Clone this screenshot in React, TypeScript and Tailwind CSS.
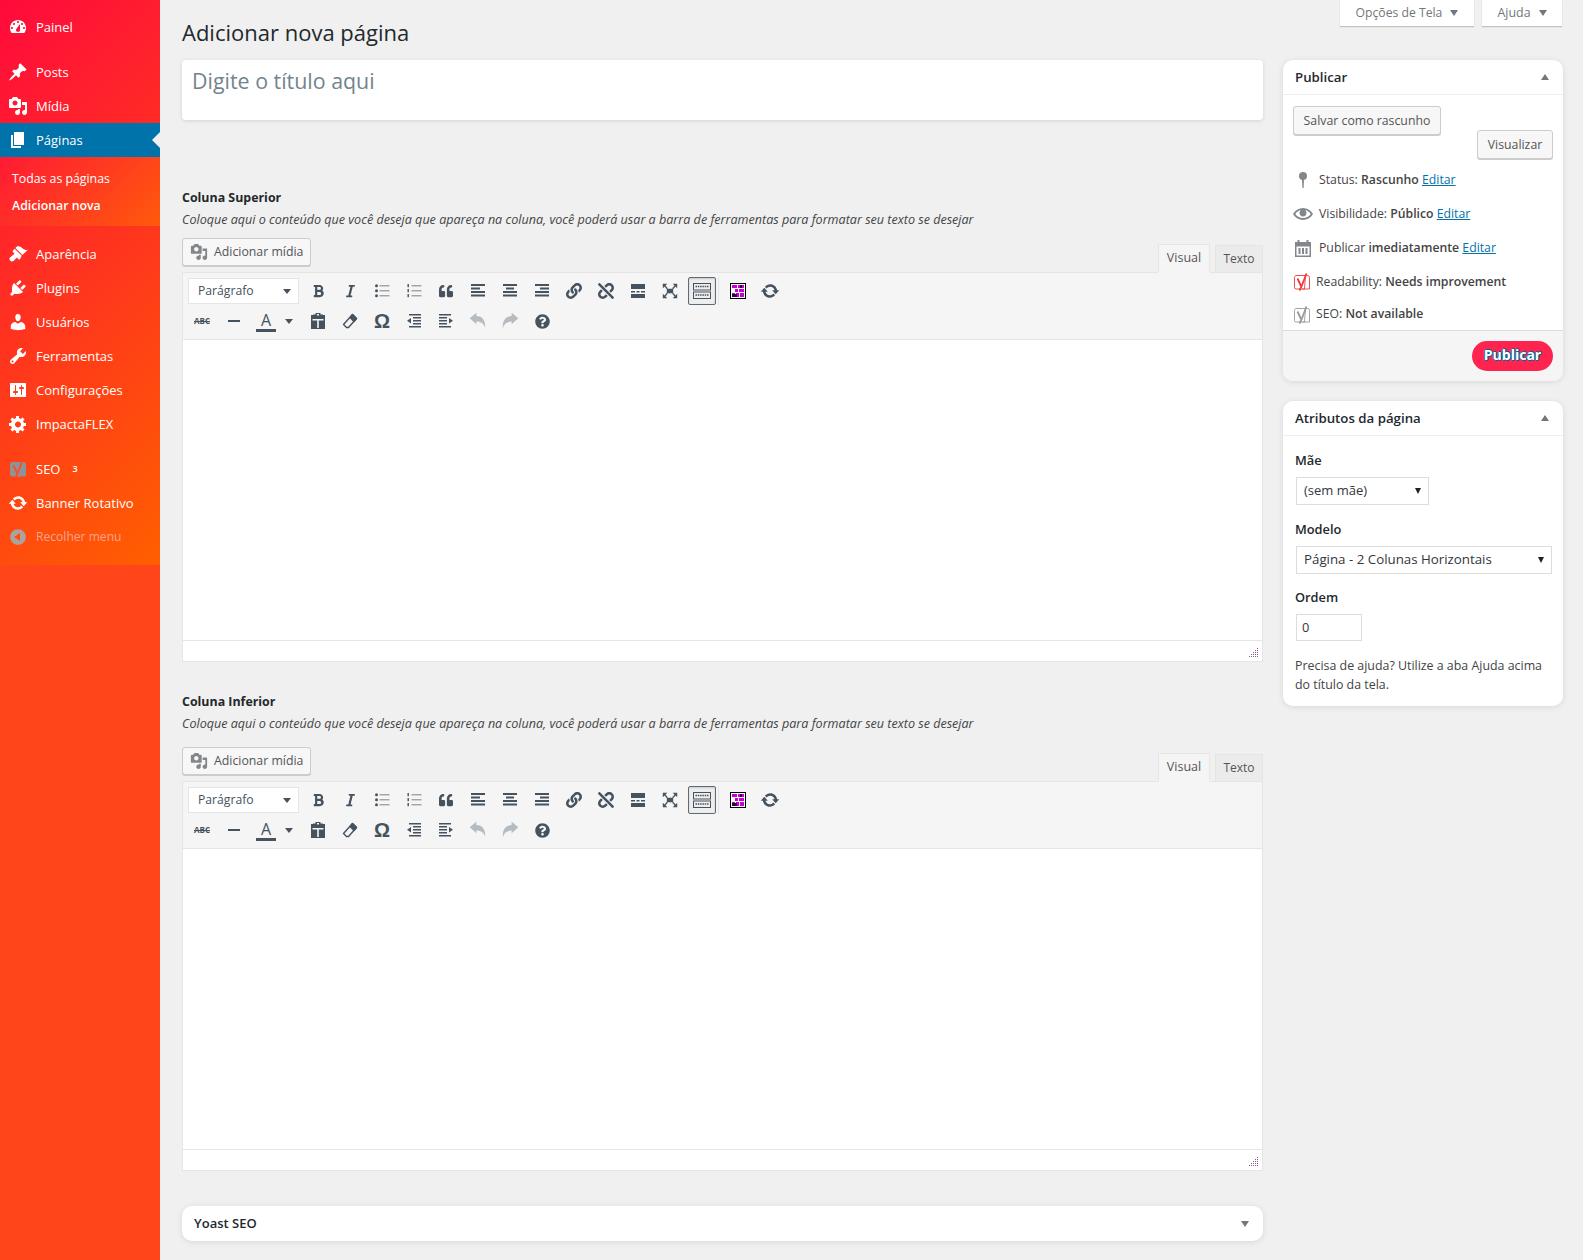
import { FaBold, FaItalic, FaQuoteLeft, FaLink, FaUnlink, FaQuestionCircle } from "react-icons/fa"

const dash = {
  painel: "M3.76 16h12.48c1.1-1.37 1.76-3.11 1.76-5 0-4.42-3.58-8-8-8s-8 3.58-8 8c0 1.89.66 3.63 1.76 5zM10 4c.55 0 1 .45 1 1s-.45 1-1 1-1-.45-1-1 .45-1 1-1zM6 6c.55 0 1 .45 1 1s-.45 1-1 1-1-.45-1-1 .45-1 1-1zm8 0c.55 0 1 .45 1 1s-.45 1-1 1-1-.45-1-1 .45-1 1-1zm-5.37 5.55L12 7v6c0 1.1-.9 2-2 2s-2-.9-2-2c0-.57.24-1.08.63-1.45zM4 10c.55 0 1 .45 1 1s-.45 1-1 1-1-.45-1-1 .45-1 1-1zm12 0c.55 0 1 .45 1 1s-.45 1-1 1-1-.45-1-1 .45-1 1-1z",
  post: "M10.44 3.02l1.82-1.82 6.36 6.35-1.83 1.82c-1.05-.68-2.48-.57-3.41.36l-.75.75c-.92.93-1.04 2.35-.35 3.41l-1.83 1.82-2.41-2.41-2.8 2.79c-.42.42-3.38 2.71-3.8 2.29s1.86-3.39 2.28-3.81l2.79-2.79L4.1 9.36l1.83-1.82c1.05.69 2.48.57 3.4-.36l.75-.75c.93-.92 1.05-2.35.36-3.41z",
  media: "M13 11V4c0-.55-.45-1-1-1h-1.67L9 1H5L3.67 3H2c-.55 0-1 .45-1 1v7c0 .55.45 1 1 1h10c.55 0 1-.45 1-1zM7 4.5c1.38 0 2.5 1.12 2.5 2.5S8.38 9.5 7 9.5 4.5 8.38 4.5 7 5.62 4.5 7 4.5zM14 6h5v10.5c0 1.38-1.12 2.5-2.5 2.5S14 17.88 14 16.5s1.12-2.5 2.5-2.5c.17 0 .34.02.5.05V9h-3V6zm-4 8.05V13h2v3.5c0 1.38-1.12 2.5-2.5 2.5S7 17.88 7 16.5 8.12 14 9.5 14c.17 0 .34.02.5.05z",
  page: "M6 15V2h10v13H6zm-1 1h8v2H3V5h2v11z",
  brush: "M14.48 11.06L7.41 3.99l1.5-1.5c.5-.56 2.3-.47 3.51.32 1.21.8 1.43 1.28 2.91 2.1 1.18.64 2.45 1.26 4.45.85zM13.77 11.77L6.7 4.7 4.93 6.47c-.39.39-.39 1.02 0 1.41l1.06 1.06c.39.39.39 1.03 0 1.42-.6.6-1.43 1.11-2.21 1.69-.35.26-.7.53-1.01.84C1.43 13.23.9 14.8 2 16.5c1.2 1.5 3 1 3.8.3.6-.5 1.4-1.5 2.3-2.5.5-.6 1-.5 1.4-.1l1.06 1.06c.39.39 1.02.39 1.41 0z",
  plugin: "M13.11 4.36L9.87 7.6 8 5.73l3.24-3.24c.35-.34 1.05-.2 1.56.32.52.51.66 1.21.31 1.55zm-8 1.77l.91-1.12 9.01 9.01-1.19.84c-.71.71-2.63 1.16-3.82 1.16H6.14L4.9 17.26c-.59.59-1.54.59-2.12 0-.59-.58-.59-1.53 0-2.12l1.24-1.24v-3.88c0-1.13.4-3.19 1.09-3.89zm7.26 3.97l3.24-3.24c.34-.35 1.04-.21 1.55.31.52.51.66 1.21.31 1.55l-3.24 3.25z",
  users: "M10 9.25c-2.27 0-2.73-3.44-2.73-3.44C7 4.02 7.82 2 9.97 2c2.16 0 2.98 2.02 2.71 3.81 0 0-.41 3.44-2.68 3.44zm0 2.57L12.72 10c2.39 0 4.52 2.33 4.52 4.53v2.49s-3.65 1.13-7.24 1.13c-3.65 0-7.24-1.13-7.24-1.13v-2.49c0-2.25 1.94-4.48 4.47-4.48z",
  tools: "M16.68 9.77c-1.34 1.34-3.3 1.67-4.95.99l-5.41 6.52c-.99.99-2.59.99-3.58 0s-.99-2.59 0-3.57l6.52-5.42c-.68-1.65-.35-3.61.99-4.95 1.28-1.28 3.12-1.62 4.72-1.06l-2.89 2.89 2.82 2.82 2.86-2.87c.53 1.58.18 3.39-1.08 4.65zM3.81 16.21c.4.39 1.04.39 1.43 0 .4-.4.4-1.04 0-1.43-.39-.4-1.03-.4-1.43 0-.39.39-.39 1.03 0 1.43z",
  settings: "M18 16V4c0-.55-.45-1-1-1H3c-.55 0-1 .45-1 1v12c0 .55.45 1 1 1h14c.55 0 1-.45 1-1zM8 11h1c.55 0 1 .45 1 1s-.45 1-1 1H8v1.5c0 .28-.22.5-.5.5s-.5-.22-.5-.5V13H6c-.55 0-1-.45-1-1s.45-1 1-1h1V5.5c0-.28.22-.5.5-.5s.5.22.5.5V11zm5-2h-1c-.55 0-1-.45-1-1s.45-1 1-1h1V5.5c0-.28.22-.5.5-.5s.5.22.5.5V7h1c.55 0 1 .45 1 1s-.45 1-1 1h-1v5.5c0 .28-.22.5-.5.5s-.5-.22-.5-.5V9z",
  generic: "M18 12h-2.18c-.17.7-.44 1.35-.81 1.93l1.54 1.54-2.1 2.1-1.54-1.54c-.58.36-1.23.63-1.91.79V19H8v-2.18c-.68-.16-1.33-.43-1.91-.79l-1.54 1.54-2.12-2.12 1.54-1.54c-.36-.58-.63-1.23-.79-1.91H1V9.03h2.17c.16-.7.44-1.35.8-1.94L2.43 5.55l2.1-2.1 1.54 1.54c.58-.37 1.24-.64 1.93-.81V2h3v2.18c.68.16 1.33.43 1.91.79l1.54-1.54 2.12 2.12-1.54 1.54c.36.59.64 1.24.8 1.94H18V12zm-8 1.5c1.66 0 3-1.34 3-3s-1.34-3-3-3-3 1.34-3 3 1.34 3 3 3z",
  update: "M10.2 3.28c3.53 0 6.43 2.61 6.92 6h2.08l-3.5 4-3.5-4h2.32c-.45-1.97-2.21-3.44-4.32-3.44-1.45 0-2.73.71-3.54 1.78L4.95 5.66C6.23 4.2 8.11 3.28 10.2 3.28zm-.4 13.44c-3.52 0-6.43-2.61-6.92-6H.8l3.5-4c1.17 1.33 2.33 2.67 3.5 4H5.48c.45 1.97 2.21 3.44 4.32 3.44 1.45 0 2.73-.71 3.54-1.78l1.71 1.95c-1.28 1.46-3.15 2.39-5.25 2.39z",
  eye: "M19.7 9.4C17.7 6 14 3.9 10 3.9S2.3 6 .3 9.4L0 10l.3.6c2 3.4 5.7 5.5 9.7 5.5s7.7-2.1 9.7-5.5l.3-.6-.3-.6zM10 14.1c-3.1 0-6-1.6-7.7-4.1C3.6 8 5.7 6.6 8 6.1c-.9.6-1.5 1.7-1.5 2.9 0 1.9 1.6 3.5 3.5 3.5s3.5-1.6 3.5-3.5c0-1.2-.6-2.3-1.5-2.9 2.3.5 4.4 1.9 5.7 3.9-1.7 2.5-4.6 4.1-7.7 4.1z",
}

function Dash({ d, className }: { d: string; className?: string }) {
  return (
    <svg viewBox="0 0 20 20" className={className} fill="currentColor">
      <path d={d} fillRule="evenodd" />
    </svg>
  )
}

// yoast logo, box with the y and its slash
function YoastMark({ box, y, fillBox }: { box: string; y: string; fillBox?: boolean }) {
  return (
    <svg viewBox="0 0 18 18" className="w-[18px] h-[18px] shrink-0">
      <path d="M4 2.500h8.500l-1 13.500H3a1.500 1.500 0 0 1-1.500-1.500V4.500A2 2 0 0 1 4 2.500z" fill={fillBox ? box : "none"} stroke={box} strokeWidth="0.9" />
      <path d="M12.500 2.500h2a2 2 0 0 1 2 2V16h-7" fill={fillBox ? box : "none"} stroke={box} strokeWidth="0.9" />
      <path d="M4.500 5.500l3.500 7.500M13.500 0.500L8.500 13.500 6.500 17.500" fill="none" stroke={y} strokeWidth="1.800" />
    </svg>
  )
}

function MenuItem({ label, d, active, muted }: { label: string; d: string; active?: boolean; muted?: boolean }) {
  return (
    <div className={`relative flex items-center h-[34px] ${active ? "bg-[#0073aa]" : ""} ${muted ? "text-[#f7a48c]" : "text-white"}`}>
      <Dash d={d} className={`w-5 h-5 ml-2 shrink-0 ${muted ? "text-[#aaa49f]" : ""}`} />
      <span className={`ml-2 pt-px ${muted ? "text-[12.100px]" : "text-[13px]"}`}>{label}</span>
      {active && <div className="absolute right-0 top-[9px] w-0 h-0 border-y-[8px] border-y-transparent border-r-[8px] border-r-[#f1f1f1]" />}
    </div>
  )
}

function Sidebar() {
  return (
    <aside className="w-[160px] shrink-0 bg-[#ff4519]">
      <div className="bg-[linear-gradient(135deg,#ff0a3c,#ff5f00)] pt-[10px] pb-[11px]">
        <MenuItem label="Painel" d={dash.painel} />
        <div className="h-[11px]" />
        <MenuItem label="Posts" d={dash.post} />
        <MenuItem label="Mídia" d={dash.media} />
        <MenuItem label="Páginas" d={dash.page} active />
        <div className="h-[69px] pt-[8px] flex flex-col text-[12.300px] text-white bg-[linear-gradient(135deg,#ff1a34,#ff5a0c)] pl-3 leading-[27px]">
          <span>Todas as páginas</span>
          <span className="font-semibold">Adicionar nova</span>
        </div>
        <div className="h-[11px]" />
        <MenuItem label="Aparência" d={dash.brush} />
        <MenuItem label="Plugins" d={dash.plugin} />
        <MenuItem label="Usuários" d={dash.users} />
        <MenuItem label="Ferramentas" d={dash.tools} />
        <MenuItem label="Configurações" d={dash.settings} />
        <MenuItem label="ImpactaFLEX" d={dash.generic} />
        <div className="h-[11px]" />
        <div className="flex items-center h-[34px] text-white">
          <div className="ml-[9px] shrink-0"><YoastMark box="#8d9499" y="#ff4a25" fillBox /></div>
          <span className="ml-[9px] pt-px text-[13px]">SEO</span>
          <span className="ml-[12px] text-[9px] font-semibold">3</span>
        </div>
        <MenuItem label="Banner Rotativo" d={dash.update} />
        <MenuItem label="Recolher menu" d="M10 2.16c4.33 0 7.84 3.51 7.84 7.84s-3.51 7.84-7.84 7.84S2.16 14.33 2.16 10 5.71 2.16 10 2.16zm2 11.84V6l-6 4z" muted />
      </div>
    </aside>
  )
}

const ink = "text-[#46535e]"

function Lines({ rows }: { rows: [number, number][] }) {
  return (
    <svg viewBox="0 0 20 20" className="w-5 h-5" fill="currentColor">
      {rows.map(([x, w], i) => (
        <rect key={i} x={x} y={3 + i * 3.500} width={w} height="2" />
      ))}
    </svg>
  )
}

function ListIcon({ numbered }: { numbered?: boolean }) {
  return (
    <svg viewBox="0 0 20 20" className="w-5 h-5" fill="currentColor">
      {[4, 9, 14].map((y) => (
        <g key={y}>
          <rect x="7.500" y={y + 0.300} width="10" height="1" opacity="0.7" />
          {numbered ? <rect x="3.500" y={y - 1} width="1.400" height="3.200" /> : <circle cx="4.500" cy={y + 0.800} r="1.500" />}
        </g>
      ))}
    </svg>
  )
}

function ToolBtn({ children, className }: { children: React.ReactNode; className?: string }) {
  return <div className={`w-7 h-7 flex items-center justify-center ${className ?? ""}`}>{children}</div>
}

function Caret({ className }: { className?: string }) {
  return <div className={`w-0 h-0 border-x-[4px] border-x-transparent border-t-[5px] border-t-[#46535e] ${className ?? ""}`} />
}

function Toolbar() {
  return (
    <div className={`bg-[#f5f5f5] h-[67px] border-b border-[#e5e5e5] pl-[5px] pt-[4px] flex flex-col gap-[2px] ${ink}`}>
      <div className="flex items-center h-7 gap-1">
        <div className="w-[111px] h-[26px] bg-white border border-[#e5e5e5] flex items-center justify-between pl-[9px] pr-[7px] text-[12.200px] mr-[1px]">
          <span className="pt-px">Parágrafo</span>
          <Caret />
        </div>
        <ToolBtn><FaBold className="w-[11px] h-[14px]" /></ToolBtn>
        <ToolBtn><FaItalic className="w-[11px] h-[14px]" /></ToolBtn>
        <ToolBtn><ListIcon /></ToolBtn>
        <ToolBtn><ListIcon numbered /></ToolBtn>
        <ToolBtn><FaQuoteLeft className="w-[16px] h-[14px]" /></ToolBtn>
        <ToolBtn><Lines rows={[[3, 14], [3, 9], [3, 14], [3, 14]]} /></ToolBtn>
        <ToolBtn><Lines rows={[[3, 14], [6, 8], [3, 14], [3, 14]]} /></ToolBtn>
        <ToolBtn><Lines rows={[[3, 14], [8, 9], [3, 14], [3, 14]]} /></ToolBtn>
        <ToolBtn><FaLink className="w-[16px] h-[16px]" /></ToolBtn>
        <ToolBtn><FaUnlink className="w-[16px] h-[16px]" /></ToolBtn>
        <ToolBtn>
          <svg viewBox="0 0 20 20" className="w-5 h-5" fill="currentColor">
            <path d="M3 3h14v5H3zM3 10h4v1.500H3zM8.500 10h3v1.500h-3zM13 10h4v1.500h-4zM3 13h14v4H3z" />
          </svg>
        </ToolBtn>
        <ToolBtn>
          <svg viewBox="0 0 20 20" className="w-[18px] h-[18px]" fill="currentColor">
            <path d="M6.500 7.500h7v5h-7zM2 2h5L2 7zM18 2v5L13 2zM2 18v-5l5 5zM18 18h-5l5-5z" />
            <path d="M4 4l3 3.500M16 4l-3 3.500M4 16l3-3.500M16 16l-3-3.500" stroke="currentColor" strokeWidth="1.500" />
          </svg>
        </ToolBtn>
        <ToolBtn className="border border-[#5c6b76] rounded-[2px] bg-[#eeeeee] shadow-[inset_0_1px_2px_rgba(0,0,0,0.15)]">
          <svg viewBox="0 0 20 20" className="w-5 h-5" fill="none" stroke="currentColor" strokeWidth="1">
            <rect x="1.500" y="2.500" width="17" height="6.500" />
            <rect x="1.500" y="11" width="17" height="6.500" />
            <path d="M3.500 5.500h13M3.500 14h13" strokeDasharray="1.500 0.800" strokeWidth="1.600" />
          </svg>
        </ToolBtn>
        <div className="w-px h-7 bg-[#e5e5e5] -ml-[2px] mr-[5px]" />
        <div className="w-[28px] h-7 flex items-center justify-center -ml-[4px]">
          <svg viewBox="0 0 16 16" className="w-[16px] h-[16px]">
            <rect x="0.500" y="0.500" width="15" height="15" fill="#fff" stroke="#000" />
            <path d="M2 2h5v3H2zM8 2h2v3H8zM12 2h2v3h-2zM5 6h3v3H5zM9 6h5v3H9zM2 10h3v4H2zM6 10h3v4H6zM10 10h4v4h-4z" fill="#c700d6" />
            <path d="M2 11h5v3H2zM10 2h2v3h-2z" fill="#2d0a3a" />
          </svg>
        </div>
        <ToolBtn><Dash d={dash.update} className="w-5 h-5" /></ToolBtn>
      </div>
      <div className="flex items-center h-7 gap-1">
        <ToolBtn><span className="text-[8px] font-bold line-through">ABC</span></ToolBtn>
        <ToolBtn><div className="w-3 h-[2px] bg-[#46535e]" /></ToolBtn>
        <div className="w-[48px] h-7 flex items-center">
          <div className="w-7 flex flex-col items-center">
            <span className="text-[16px] leading-[18px]">A</span>
            <div className="w-5 h-[3px] bg-[#46535e]" />
          </div>
          <Caret className="ml-[5px]" />
        </div>
        <ToolBtn>
          <svg viewBox="0 0 20 20" className="w-5 h-5" fill="currentColor">
            <path d="M7.500 2h5v1.500H15v.5H17v14H3V4h2v-.5h2.500zM9 3v1.500h2V3zM4.500 8v1.500h11V8zM9.200 9.500V17h1.600V9.500z" fillRule="evenodd" />
          </svg>
        </ToolBtn>
        <ToolBtn>
          <svg viewBox="0 0 20 20" className="w-5 h-5" fill="none" stroke="currentColor" strokeWidth="1.400" strokeLinejoin="round">
            <path d="M12.500 3.500l4 4-8 9h-2l-3-3z" />
            <path d="M12.500 3.500l4 4-2.500 3-4-4z" fill="currentColor" />
          </svg>
        </ToolBtn>
        <ToolBtn><span className="text-[20px] leading-none font-semibold font-['Liberation_Sans',sans-serif]">Ω</span></ToolBtn>
        <ToolBtn>
          <svg viewBox="0 0 20 20" className="w-5 h-5" fill="currentColor">
            <path d="M5 3h12v1.600H5zM9 6h8v1.600H9zM9 9h8v1.600H9zM9 12h8v1.600H9zM5 15h12v1.600H5zM3 9.800L7 7v5.600z" />
          </svg>
        </ToolBtn>
        <ToolBtn>
          <svg viewBox="0 0 20 20" className="w-5 h-5" fill="currentColor">
            <path d="M3 3h12v1.600H3zM3 6h8v1.600H3zM3 9h8v1.600H3zM3 12h8v1.600H3zM3 15h12v1.600H3zM17 9.800L13 7v5.600z" />
          </svg>
        </ToolBtn>
        <ToolBtn>
          <svg viewBox="0 0 20 20" className="w-[22px] h-[22px] text-[#b4bcc2]" fill="currentColor">
            <path d="M2.500 7.500L8.500 2.500v3c5.500 0 8.500 4 8 11-1-4-3.500-6-8-6v2.500z" />
          </svg>
        </ToolBtn>
        <ToolBtn>
          <svg viewBox="0 0 20 20" className="w-[22px] h-[22px] text-[#b4bcc2]" fill="currentColor">
            <path d="M17.500 7.500L11.500 2.500v3c-5.500 0-8.500 4-8 11 1-4 3.500-6 8-6v2.500z" />
          </svg>
        </ToolBtn>
        <ToolBtn><FaQuestionCircle className="w-[15px] h-[15px]" /></ToolBtn>
      </div>
    </div>
  )
}

function Resize() {
  return (
    <svg viewBox="0 0 10 10" className="w-[10px] h-[10px] text-[#8a5a8f]" fill="currentColor">
      {[[8, 0], [8, 2], [6, 2], [8, 4], [6, 4], [4, 4], [8, 6], [6, 6], [4, 6], [2, 6], [8, 8], [6, 8], [4, 8], [2, 8], [0, 8]].map(([x, y]) => (
        <rect key={`${x}-${y}`} x={x} y={y} width="1" height="1" />
      ))}
    </svg>
  )
}

function EditorBlock({ title, spaced }: { title: string; spaced?: boolean }) {
  return (
    <section>
      <h3 className="text-[12.400px] leading-[18px] font-bold text-[#23282d]">{title}</h3>
      <p className="mt-[4px] text-[12.570px] leading-[18px] italic text-[#444]">
        Coloque aqui o conteúdo que você deseja que apareça na coluna, você poderá usar a barra de ferramentas para formatar seu texto se desejar
      </p>
      <div className={`flex items-end justify-between h-[34px] ${spaced ? "mt-[14px]" : "mt-[9px]"}`}>
        <button className="mb-[6px] h-[28px] w-[129px] flex items-center gap-[4px] pl-[7px] bg-[#f7f7f7] border border-[#cccccc] rounded-[3px] shadow-[0_1px_0_#cccccc] text-[12.300px] text-[#555]">
          <Dash d={dash.media} className="w-[18px] h-[18px] text-[#82878c] shrink-0" />
          <span className="ml-[2px] pt-px">Adicionar mídia</span>
        </button>
        <div className="flex items-end gap-[5px] -mb-px z-10">
          <div className="w-[52px] h-[29px] bg-[#f5f5f5] border border-[#e5e5e5] border-b-[#f5f5f5] flex items-center justify-center text-[12.500px] text-[#555]">Visual</div>
          <div className="w-[48px] h-[28px] bg-[#ebebeb] border border-[#e5e5e5] flex items-center justify-center text-[12px] text-[#555]">Texto</div>
        </div>
      </div>
      <div className="border border-[#e5e5e5] bg-white">
        <Toolbar />
        <div className="h-[301px] bg-white border-b border-[#e5e5e5]" />
        <div className="h-[20px] flex items-end justify-end pr-[3px] pb-[3px]"><Resize /></div>
      </div>
    </section>
  )
}

function Box({ title, children }: { title: string; children: React.ReactNode }) {
  return (
    <div className="bg-white rounded-[10px] shadow-[0_1px_6px_rgba(0,0,0,0.1)] overflow-hidden">
      <div className="h-[35px] border-b border-[#eeeeee] flex items-center justify-between pl-[12px] pr-[14px]">
        <span className="pt-[2px] text-[13.250px] font-semibold text-[#23282d]">{title}</span>
        <div className="w-0 h-0 border-x-[4px] border-x-transparent border-b-[6px] border-b-[#72777c]" />
      </div>
      {children}
    </div>
  )
}

function Row({ icon, h, children, gap }: { icon: React.ReactNode; h: string; gap: string; children: React.ReactNode }) {
  return (
    <div className={`flex items-center pl-[10px] text-[12.250px] text-[#444] ${h}`}>
      <div className={`shrink-0 flex justify-center ${gap}`}>{icon}</div>
      <span>{children}</span>
    </div>
  )
}

function Edit() {
  return <a className="text-[#0073aa] underline">Editar</a>
}

function PublishBox() {
  return (
    <Box title="Publicar">
      <div className="px-[10px] pt-[11px] h-[65px] relative flex flex-col">
        <button className="self-start h-[29px] w-[148px] pt-px bg-[#f7f7f7] border border-[#cccccc] rounded-[3px] shadow-[0_1px_0_#cccccc] text-[12.300px] text-[#555]">Salvar como rascunho</button>
        <button className="self-end mt-[-5px] h-[29px] w-[76px] pt-px bg-[#f7f7f7] border border-[#cccccc] rounded-[3px] shadow-[0_1px_0_#cccccc] text-[12.300px] text-[#555]">Visualizar</button>
      </div>
      <div className="pt-[3px]">
        <Row h="h-[34px]" gap="w-[26px]" icon={
          <svg viewBox="0 0 20 20" className="w-5 h-5 -ml-[6px] text-[#82878c]" fill="currentColor">
            <circle cx="10" cy="6" r="4" />
            <path d="M9 9h2l-.4 9h-1.200z" />
          </svg>
        }>Status: <b className="font-semibold">Rascunho</b> <Edit /></Row>
        <Row h="h-[34px]" gap="w-[26px]" icon={<Dash d={dash.eye} className="w-5 h-5 -ml-[6px] text-[#82878c]" />}>
          Visibilidade: <b className="font-semibold">Público</b> <Edit />
        </Row>
        <Row h="h-[34px]" gap="w-[26px]" icon={
          <svg viewBox="0 0 20 20" className="w-5 h-5 -ml-[6px] text-[#82878c]" fill="currentColor">
            <path fillRule="evenodd" d="M2 4h2.500V2h2v2h7V2h2v2H18v15H2zM3.500 8.500V17.500h13V8.500zM5.500 10h2v6h-2zM9 10h2v6H9zM12.500 10h2v6h-2z" />
          </svg>
        }>Publicar <b className="font-semibold">imediatamente</b> <Edit /></Row>
        <Row h="h-[34px]" gap="w-[23px]" icon={<div className="-ml-[6px]"><YoastMark box="#ee3a3a" y="#ee3a3a" /></div>}>
          Readability: <b className="font-semibold">Needs improvement</b>
        </Row>
        <Row h="h-[31px]" gap="w-[23px]" icon={<div className="-ml-[6px]"><YoastMark box="#999999" y="#999999" /></div>}>
          SEO: <b className="font-semibold">Not available</b>
        </Row>
      </div>
      <div className="h-[51px] bg-[#f5f5f5] border-t border-[#dddddd] flex items-center justify-end pr-[10px]">
        <button className="w-[81px] h-[30px] pb-[3px] rounded-full bg-[#ff2450] text-white text-[14px] font-bold [text-shadow:0_1px_0_#006799,1px_0_0_#006799,0_-1px_0_#006799,-1px_0_0_#006799]">Publicar</button>
      </div>
    </Box>
  )
}

function FakeSelect({ label, w, size }: { label: string; w: string; size: string }) {
  return (
    <div className={`h-[28px] bg-white border border-[#dddddd] flex items-center justify-between pl-[7px] pr-[7px] text-[#32373c] ${size} ${w}`}>
      <span>{label}</span>
      <div className="w-0 h-0 border-x-[3.500px] border-x-transparent border-t-[6px] border-t-[#222]" />
    </div>
  )
}

function AttributesBox() {
  return (
    <Box title="Atributos da página">
      <div className="pl-[12px] pr-[10px] pt-[15px] pb-[12px] text-[12.800px] text-[#444]">
        <div className="font-semibold leading-[18px] text-[#23282d]">Mãe</div>
        <div className="mt-[8px] ml-px"><FakeSelect label="(sem mãe)" w="w-[133px]" size="text-[13px]" /></div>
        <div className="mt-[15px] font-semibold leading-[18px] text-[#23282d]">Modelo</div>
        <div className="mt-[8px] ml-px"><FakeSelect label="Página - 2 Colunas Horizontais" w="w-[256px]" size="text-[13.300px]" /></div>
        <div className="mt-[14px] font-semibold leading-[18px] text-[#23282d]">Ordem</div>
        <div className="mt-[8px] ml-px w-[66px] h-[27px] bg-white border border-[#dddddd] flex items-center pl-[5px] text-[#32373c]">0</div>
        <p className="mt-[15px] leading-[19px] text-[12.400px]">Precisa de ajuda? Utilize a aba Ajuda acima do título da tela.</p>
      </div>
    </Box>
  )
}

function ScreenTab({ label, w, size }: { label: string; w: string; size: string }) {
  return (
    <div className={`h-[26px] bg-white shadow-[0_1px_1px_rgba(0,0,0,0.2)] flex items-center justify-center gap-[8px] text-[#72777c] ${size} ${w}`}>
      {label}
      <div className="w-0 h-0 border-x-[4px] border-x-transparent border-t-[6px] border-t-[#72777c]" />
    </div>
  )
}

export default function App() {
  return (
    <div className="flex min-h-[1260px] bg-[#f0f0f0] font-['Open_Sans',sans-serif]">
      <Sidebar />
      <main className="flex gap-[20px] pl-[22px] pr-[20px] pb-[19px]">
        <div className="w-[1081px]">
          <h1 className="pt-[17px] h-[60px] text-[22px] leading-[30px] text-[#23282d]">Adicionar nova página</h1>
          <div className="h-[60px] bg-white rounded-[4px] shadow-[0_1px_4px_rgba(0,0,0,0.12)] pl-[10px] pt-[3px] text-[21.400px] leading-[36px] text-[#72848c]">Digite o título aqui</div>
          <div className="mt-[69px]"><EditorBlock title="Coluna Superior" /></div>
          <div className="mt-[31px]"><EditorBlock title="Coluna Inferior" spaced /></div>
          <div className="mt-[35px] h-[35px] bg-white rounded-[10px] shadow-[0_1px_6px_rgba(0,0,0,0.1)] flex items-center justify-between pl-[12px] pr-[14px]">
            <span className="pt-px text-[13px] font-semibold text-[#23282d]">Yoast SEO</span>
            <div className="w-0 h-0 border-x-[4px] border-x-transparent border-t-[6px] border-t-[#72777c]" />
          </div>
        </div>
        <div className="w-[280px]">
          <div className="h-[26px] mb-[34px] flex justify-end gap-[8px] pr-px">
            <ScreenTab label="Opções de Tela" w="w-[134px]" size="text-[12.200px]" />
            <ScreenTab label="Ajuda" w="w-[80px]" size="text-[12.400px]" />
          </div>
          <PublishBox />
          <div className="mt-[20px]"><AttributesBox /></div>
        </div>
      </main>
    </div>
  )
}
